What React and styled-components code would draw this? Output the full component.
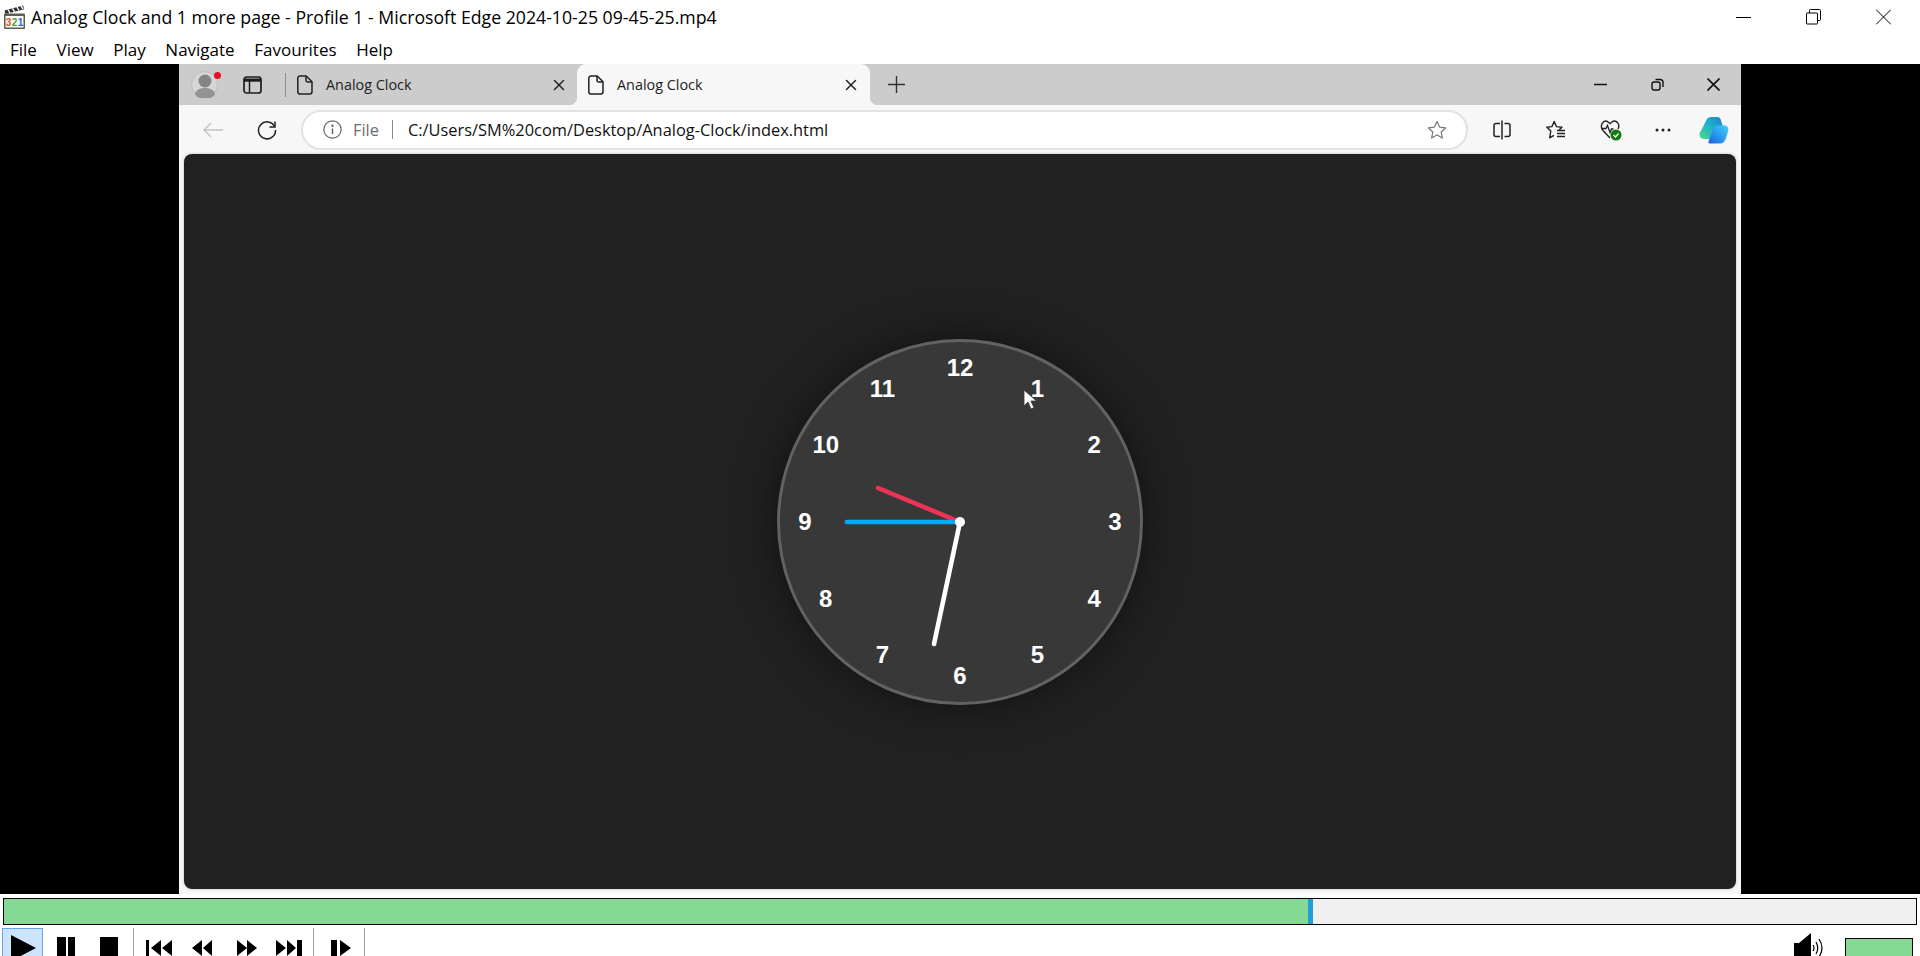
import React from "react";
import styled, { createGlobalStyle } from "styled-components";

const GlobalStyle = createGlobalStyle`
  html, body {
    margin: 0;
    padding: 0;
    background: #fff;
    overflow: hidden;
  }
  * {
    box-sizing: border-box;
  }
`;

const UI_FONT = `"Open Sans", "Noto Sans", sans-serif`;

const Window = styled.div`
  width: 1920px;
  height: 956px;
  display: flex;
  flex-direction: column;
  overflow: hidden;
  background: #fff;
  font-family: ${UI_FONT};
  color: #000;
`;

const TitleBar = styled.div`
  height: 37px;
  flex: none;
  display: flex;
  align-items: center;
  padding-left: 3px;
  padding-bottom: 3px;
`;

const TitleText = styled.div`
  margin-left: 5px;
  font-size: 17.7px;
  white-space: nowrap;
  flex: 1;
`;

const WinButtons = styled.div`
  display: flex;
  align-items: center;
  gap: ${(p) => p.$gap}px;
  margin-right: ${(p) => p.$right}px;
`;

const MenuBar = styled.div`
  height: 27px;
  flex: none;
  display: flex;
  align-items: center;
  gap: 19.6px;
  padding-left: 10px;
  padding-bottom: 2px;
  font-size: 17px;
`;

const VideoArea = styled.div`
  height: 830px;
  flex: none;
  background: #000;
  padding: 0 179px;
`;

const Browser = styled.div`
  height: 100%;
  background: #f7f7f7;
  display: flex;
  flex-direction: column;
`;

const TabStrip = styled.div`
  height: 41px;
  flex: none;
  background: #cccccc;
  display: flex;
  align-items: center;
  padding-left: 12px;
`;

const Avatar = styled.div`
  position: relative;
  width: 27px;
  height: 27px;
  flex: none;
`;

const RedDot = styled.span`
  position: absolute;
  top: 1px;
  right: -3px;
  width: 7px;
  height: 7px;
  border-radius: 50%;
  background: #e81123;
`;

const StripDivider = styled.div`
  width: 1px;
  height: 24px;
  background: #8d8d8d;
  margin: 0 11px 0 23px;
`;

const Tab = styled.div`
  position: relative;
  height: 41px;
  width: ${(p) => p.$width}px;
  flex: none;
  display: flex;
  align-items: center;
  padding-left: ${(p) => p.$pad}px;
  font-size: 14.4px;
  color: #222;
  border-radius: 9px 9px 0 0;
  background: ${(p) => (p.$active ? "#f7f7f7" : "transparent")};

  ${(p) =>
    p.$active &&
    `
    &::before, &::after {
      content: "";
      position: absolute;
      bottom: 0;
      width: 8px;
      height: 8px;
    }
    &::before {
      left: -8px;
      background: radial-gradient(circle at 0 0, #cccccc 8px, #f7f7f7 8.5px);
    }
    &::after {
      right: -8px;
      background: radial-gradient(circle at 100% 0, #cccccc 8px, #f7f7f7 8.5px);
    }
  `}
`;

const TabLabel = styled.span`
  margin-left: 13px;
  flex: 1;
  white-space: nowrap;
`;

const TabClose = styled.span`
  display: flex;
  margin-right: ${(p) => p.$right}px;
`;

const PlusButton = styled.div`
  display: flex;
  margin-left: 18px;
  flex: 1;
`;

const Toolbar = styled.div`
  height: 49px;
  flex: none;
  display: flex;
  align-items: center;
  padding-left: 24px;
`;

const Omnibox = styled.div`
  width: 1167px;
  height: 40px;
  flex: none;
  margin-left: 24px;
  border: 2px solid #e2e2e2;
  border-radius: 20px;
  background: #fff;
  display: flex;
  align-items: center;
  padding-left: 20px;
  padding-right: 19px;
  font-size: 16.4px;
`;

const SchemeText = styled.span`
  margin-left: 11px;
  color: #6b6b6b;
`;

const OmniDivider = styled.span`
  width: 1px;
  height: 19px;
  background: #8a8a8a;
  margin: 0 15px 0 13px;
`;

const UrlText = styled.span`
  flex: 1;
  color: #111;
  white-space: nowrap;
`;

const ToolIcons = styled.div`
  display: flex;
  align-items: center;
  margin-left: 25px;
`;

const ToolIcon = styled.span`
  display: flex;
  width: ${(p) => p.$width}px;
  justify-content: flex-start;
`;

const PageCard = styled.div`
  flex: 1;
  margin: 0 5px 5px;
  background: #212121;
  border-radius: 8px;
  display: flex;
  align-items: center;
  justify-content: center;
  box-shadow: 0 0 3px rgba(0, 0, 0, 0.25);
`;

const ClockFace = styled.div`
  position: relative;
  top: 0.5px;
  width: 366px;
  height: 366px;
  border-radius: 50%;
  background: #383838;
  border: 3px solid #626262;
  box-shadow: 0 0 42px rgba(0, 0, 0, 0.5);
`;

const ClockNumber = styled.span`
  position: absolute;
  left: 50%;
  top: 50%;
  font-family: "Liberation Sans", Arial, sans-serif;
  font-weight: 700;
  font-size: 24px;
  line-height: 24px;
  color: #fff;
  transform: translate(-50%, -50%) translate(${(p) => p.$x}px, ${(p) => p.$y}px);
`;

const HandsLayer = styled.svg`
  position: absolute;
  left: -3px;
  top: -3px;
`;

const Cursor = styled.svg`
  position: absolute;
  left: 243px;
  top: 47px;
`;

const SeekRow = styled.div`
  flex: none;
  padding: 4px 3px 3px;
`;

const SeekTrack = styled.div`
  height: 27px;
  width: 1914px;
  border: 1px solid #000;
  background: #f0f0f0;
  display: flex;
`;

const SeekFill = styled.div`
  width: 1304px;
  background: #84d994;
`;

const SeekThumb = styled.div`
  width: 5px;
  background: #1f9ed8;
`;

const Controls = styled.div`
  flex: 1;
  display: flex;
  align-items: flex-start;
  padding-left: 2px;
`;

const PlayerButton = styled.div`
  width: ${(p) => p.$width}px;
  height: 40px;
  flex: none;
  padding-left: ${(p) => p.$left}px;
  padding-top: ${(p) => p.$top}px;
  background: ${(p) => (p.$active ? "#cce4ff" : "transparent")};
  border: ${(p) => (p.$active ? "1px solid #66a7e8" : "none")};

  svg {
    display: block;
  }
`;

const ControlDivider = styled.div`
  width: 1px;
  height: 28px;
  background: #a0a0a0;
  flex: none;
`;

const VolumeGroup = styled.div`
  margin-left: auto;
  display: flex;
  align-items: flex-start;
  padding-top: 5px;
  padding-right: 7px;
`;

const VolumeBar = styled.div`
  width: 68px;
  height: 30px;
  margin-left: 18px;
  margin-top: 5px;
  border: 1px solid #000;
  background: #84d994;
`;

const DocIcon = () => (
  <svg width="16" height="20" viewBox="0 0 16 20" fill="none" stroke="#222" strokeWidth="1.5" strokeLinejoin="round">
    <path d="M2.8 1h6.4L15 6.8v10a2.2 2.2 0 0 1-2.2 2.2H3a2.2 2.2 0 0 1-2.2-2.2V3A2.2 2.2 0 0 1 2.8 1z" />
    <path d="M9 1v4.2A1.8 1.8 0 0 0 10.8 7H15" />
  </svg>
);

const CloseIcon = () => (
  <svg width="12" height="12" viewBox="0 0 12 12" stroke="#222" strokeWidth="1.5" strokeLinecap="round">
    <path d="M1.5 1.5l9 9M10.5 1.5l-9 9" />
  </svg>
);

const AppIcon = () => (
  <svg width="23" height="24" viewBox="0 0 23 24">
    <path d="M1.5 5.5L20 .5l1.200 3.700L2.500 9z" fill="#2f2f2f" />
    <path d="M5 4.500l2 3.500M9.500 3.300l2 3.500M14 2l2 3.500M18 1l2 3.200" stroke="#f2f2f2" strokeWidth="1.5" />
    <rect x="1" y="8.5" width="21" height="15.5" rx="1" fill="#5d5d52" />
    <rect x="2.5" y="11" width="18" height="11.5" fill="#fbfbf6" />
    <text x="2.8" y="20.5" fontFamily="Liberation Sans" fontWeight="700" fontSize="10" fill="#d9542b">3</text>
    <text x="8.7" y="20.5" fontFamily="Liberation Sans" fontWeight="700" fontSize="10" fill="#4b9b38">2</text>
    <text x="14.8" y="20.5" fontFamily="Liberation Sans" fontWeight="700" fontSize="10" fill="#2f6cc4">1</text>
  </svg>
);

const numbers = [12, 1, 2, 3, 4, 5, 6, 7, 8, 9, 10, 11];

const App = () => {
  return (
    <Window>
      <GlobalStyle />
      <TitleBar>
        <AppIcon />
        <TitleText>Analog Clock and 1 more page - Profile 1 - Microsoft Edge 2024-10-25 09-45-25.mp4</TitleText>
        <WinButtons $gap={55} $right={29}>
          <svg width="15" height="16" viewBox="0 0 15 16" stroke="#000" fill="none"><path d="M0 8.5h15" /></svg>
          <svg width="15" height="16" viewBox="0 0 15 16" stroke="#000" fill="none">
            <rect x="0.5" y="4" width="11" height="11" rx="0.5" />
            <path d="M3.5 4V1.5a1 1 0 0 1 1-1h9a1 1 0 0 1 1 1v9a1 1 0 0 1-1 1H12" />
          </svg>
          <svg width="15" height="16" viewBox="0 0 15 16" stroke="#000" fill="none"><path d="M0 .5l15 15M15 .5l-15 15" /></svg>
        </WinButtons>
      </TitleBar>

      <MenuBar>
        <span>File</span>
        <span>View</span>
        <span>Play</span>
        <span>Navigate</span>
        <span>Favourites</span>
        <span>Help</span>
      </MenuBar>

      <VideoArea>
        <Browser>
          <TabStrip>
            <Avatar>
              <svg width="27" height="27" viewBox="0 0 27 27">
                <circle cx="13.5" cy="13.5" r="13" fill="#d6d6d6" stroke="#bdbdbd" />
                <circle cx="14" cy="10" r="6.5" fill="#858585" />
                <path d="M4 23.5c.5-4.5 5-6.500 10-6.500s9.500 2 10 6.500a13 13 0 0 1-20 0z" fill="#939393" />
              </svg>
              <RedDot />
            </Avatar>
            <svg width="19" height="18" viewBox="0 0 19 18" fill="none" style={{ marginLeft: 25 }}>
              <rect x="1" y="1" width="17" height="16" rx="2.5" stroke="#1c1c1c" strokeWidth="1.7" />
              <path d="M1 2.5h17v3.200H1z" fill="#1c1c1c" />
              <path d="M6.500 5v12" stroke="#1c1c1c" strokeWidth="1.5" />
            </svg>
            <StripDivider />
            <Tab $width="280" $pad="0">
              <DocIcon />
              <TabLabel>Analog Clock</TabLabel>
              <TabClose $right={12}><CloseIcon /></TabClose>
            </Tab>
            <Tab $width="293" $pad="11" $active>
              <DocIcon />
              <TabLabel>Analog Clock</TabLabel>
              <TabClose $right={13}><CloseIcon /></TabClose>
            </Tab>
            <PlusButton>
              <svg width="17" height="17" viewBox="0 0 17 17" stroke="#333" strokeWidth="1.4"><path d="M0 8.5h17M8.5 0v17" /></svg>
            </PlusButton>
            <WinButtons $gap={43.5} $right={21}>
              <svg width="13" height="13" viewBox="0 0 13 13" stroke="#111" strokeWidth="1.5"><path d="M0 6.5h13" /></svg>
              <svg width="13" height="13" viewBox="0 0 13 13" stroke="#111" strokeWidth="1.4" fill="none">
                <rect x="1" y="4" width="8" height="8" rx="2" />
                <path d="M4.500 1.500h4.500a3 3 0 0 1 3 3v4.500" />
              </svg>
              <svg width="13" height="13" viewBox="0 0 13 13" stroke="#111" strokeWidth="1.6"><path d="M.5.5l12 12M12.500.5l-12 12" /></svg>
            </WinButtons>
          </TabStrip>

          <Toolbar>
            <svg width="20" height="16" viewBox="0 0 20 16" fill="none" stroke="#c4c4c4" strokeWidth="1.5">
              <path d="M20 8H1M8 1L1 8l7 7" />
            </svg>
            <svg width="20" height="20" viewBox="0 0 20 20" fill="none" stroke="#222" strokeWidth="1.5" style={{ marginLeft: 34 }}>
              <path d="M17.600 6.500A8.500 8.500 0 1 0 18.500 10" />
              <path d="M18 1.500v5.500h-5.500" />
            </svg>
            <Omnibox>
              <svg width="19" height="19" viewBox="0 0 19 19" fill="none" stroke="#666" strokeWidth="1.2">
                <circle cx="9.5" cy="9.5" r="8.7" />
                <path d="M9.500 8.500v5.500" strokeWidth="1.5" />
                <circle cx="9.5" cy="5.7" r="0.6" fill="#666" />
              </svg>
              <SchemeText>File</SchemeText>
              <OmniDivider />
              <UrlText>C:/Users/SM%20com/Desktop/Analog-Clock/index.html</UrlText>
              <svg width="20" height="20" viewBox="0 0 20 20" fill="none" stroke="#777" strokeWidth="1.2" strokeLinejoin="round">
                <path d="M10 1.500l2.600 5.600 6.100.7-4.500 4.200 1.200 6.100L10 15.100l-5.400 3 1.200-6.100L1.300 7.800l6.100-.7z" />
              </svg>
            </Omnibox>
            <ToolIcons>
              <ToolIcon $width={53}>
                <svg width="18" height="20" viewBox="0 0 18 20" fill="none" stroke="#222" strokeWidth="1.5">
                  <path d="M7 3.500H3A2 2 0 0 0 1 5.500v9a2 2 0 0 0 2 2h4M11.500 3.500H15a2 2 0 0 1 2 2v9a2 2 0 0 1-2 2h-3.500" />
                  <path d="M9 0.500v19" />
                </svg>
              </ToolIcon>
              <ToolIcon $width={54}>
                <svg width="20" height="20" viewBox="0 0 20 20" fill="none" stroke="#222" strokeWidth="1.4" strokeLinejoin="round">
                  <path d="M13 10L16 7.300L10.500 6.600L8.200 1.500L5.900 6.600L0.800 7.300L4.800 11L3.700 17.800L8 15.300" />
                  <path d="M11 10.500h8M11 13.500h8M11 16.500h8" />
                </svg>
              </ToolIcon>
              <ToolIcon $width={55}>
                <svg width="22" height="22" viewBox="0 0 22 22" fill="none">
                  <path d="M10 19L3 11.500C-1 6.500 3.500.5 7.500 2.500L10 4.500l2.500-2c4-2 8 3 5.500 7.500" stroke="#222" strokeWidth="1.4" />
                  <path d="M1.500 9.500h4.500l1.500-3 2.500 7 1.500-3.500h2" stroke="#222" strokeWidth="1.3" />
                  <circle cx="16" cy="16" r="5.5" fill="#107c10" />
                  <path d="M13.500 16l2 2 3-3.500" stroke="#fff" strokeWidth="1.3" />
                </svg>
              </ToolIcon>
              <ToolIcon $width={44}>
                <svg width="16" height="4" viewBox="0 0 16 4" fill="#222">
                  <circle cx="2" cy="2" r="1.5" />
                  <circle cx="8" cy="2" r="1.5" />
                  <circle cx="14" cy="2" r="1.5" />
                </svg>
              </ToolIcon>
              <ToolIcon $width={30}>
                <svg width="30" height="28" viewBox="0 0 30 28">
                  <defs>
                    <linearGradient id="copA" x1="0" y1="1" x2="1" y2="0">
                      <stop offset="0" stopColor="#4bdc8e" />
                      <stop offset="0.5" stopColor="#1fb4c8" />
                      <stop offset="1" stopColor="#1a7fd8" />
                    </linearGradient>
                    <linearGradient id="copB" x1="0" y1="1" x2="1" y2="0">
                      <stop offset="0" stopColor="#1f5fe0" />
                      <stop offset="0.5" stopColor="#2a9cf0" />
                      <stop offset="1" stopColor="#45d0f5" />
                    </linearGradient>
                  </defs>
                  <path d="M12 1h6c2.500 0 3.500 1.500 4 3.500L24 11h-3c-3 0-4 2-5 5l-1.500 4c-1 2.500-3 3-5 3H5c-3.500 0-5-3-4.300-6L7 5c1-3 3-4 5-4z" fill="url(#copA)" />
                  <path d="M17 27.500h-6c-1.500 0-2-1-1.500-2l4.500-12c1-2.500 2.500-4 5-4h6.500c3 0 4.500 2.500 3.700 5.500L27 22c-1 3.500-3 5.500-6 5.500z" fill="url(#copB)" />
                </svg>
              </ToolIcon>
            </ToolIcons>
          </Toolbar>

          <PageCard>
            <ClockFace>
              {numbers.map((n) => {
                const angle = (n * Math.PI) / 6;
                return (
                  <ClockNumber key={n} $x={155 * Math.sin(angle)} $y={-154 * Math.cos(angle)}>
                    {n}
                  </ClockNumber>
                );
              })}
              <HandsLayer width="366" height="366" viewBox="-183 -183 366 366" strokeLinecap="round" strokeWidth="4.6">
                <path d="M0 0L-82 -34" stroke="#ee3355" />
                <path d="M0 0L-113 0" stroke="#00a8ff" />
                <path d="M0 0L-26 122" stroke="#ffffff" />
                <circle r="5" fill="#fff" />
              </HandsLayer>
              <Cursor width="14" height="22" viewBox="0 0 14 22">
                <path d="M1 1v16l4-4 3 7 3-1.300-3-6.700h5.500z" fill="#fff" stroke="#333" strokeWidth="0.8" />
              </Cursor>
            </ClockFace>
          </PageCard>
        </Browser>
      </VideoArea>

      <SeekRow>
        <SeekTrack>
          <SeekFill />
          <SeekThumb />
        </SeekTrack>
      </SeekRow>

      <Controls>
        <PlayerButton $width={41} $left={8} $top={6} $active>
          <svg width="25" height="26" viewBox="0 0 25 26"><path d="M0 0l25 13L0 26z" /></svg>
        </PlayerButton>
        <PlayerButton $width={43} $left={14} $top={9}>
          <svg width="18" height="24" viewBox="0 0 18 24"><path d="M0 0h9v24H0zM11 0h7v24h-7z" /></svg>
        </PlayerButton>
        <PlayerButton $width={47} $left={14} $top={9}>
          <svg width="18" height="24" viewBox="0 0 18 24"><path d="M0 0h18v24H0z" /></svg>
        </PlayerButton>
        <ControlDivider />
        <PlayerButton $width={45} $left={12} $top={12}>
          <svg width="26" height="20" viewBox="0 0 26 20"><path d="M0 0h3v20H0zM5 8L15 0v16zM16 8L26 0v16z" /></svg>
        </PlayerButton>
        <PlayerButton $width={45} $left={13} $top={12}>
          <svg width="20" height="16" viewBox="0 0 20 16"><path d="M0 8L10 0v16zM11 8L20 0v16z" /></svg>
        </PlayerButton>
        <PlayerButton $width={39} $left={13} $top={12}>
          <svg width="20" height="16" viewBox="0 0 20 16"><path d="M0 0l10 8-10 8zM10 0l10 8-10 8z" /></svg>
        </PlayerButton>
        <PlayerButton $width={50} $left={13} $top={12}>
          <svg width="26" height="20" viewBox="0 0 26 20"><path d="M0 0l10 8-10 8zM11 0l9 8-9 8zM21 0h5v20h-5z" /></svg>
        </PlayerButton>
        <ControlDivider />
        <PlayerButton $width={50} $left={17} $top={12}>
          <svg width="20" height="20" viewBox="0 0 20 20"><path d="M0 0h6v20H0zM9 0l11 8-11 8z" /></svg>
        </PlayerButton>
        <ControlDivider />
        <VolumeGroup>
          <svg width="33" height="30" viewBox="0 0 33 30" fill="none">
            <path d="M0 10h5L17 0v30H0z" fill="#000" />
            <path d="M19 12q2 3 0 6M22 9q3.500 6 0 12M25 6q6 9 0 18" stroke="#000" strokeWidth="1.2" />
          </svg>
          <VolumeBar />
        </VolumeGroup>
      </Controls>
    </Window>
  );
};

export default App;
